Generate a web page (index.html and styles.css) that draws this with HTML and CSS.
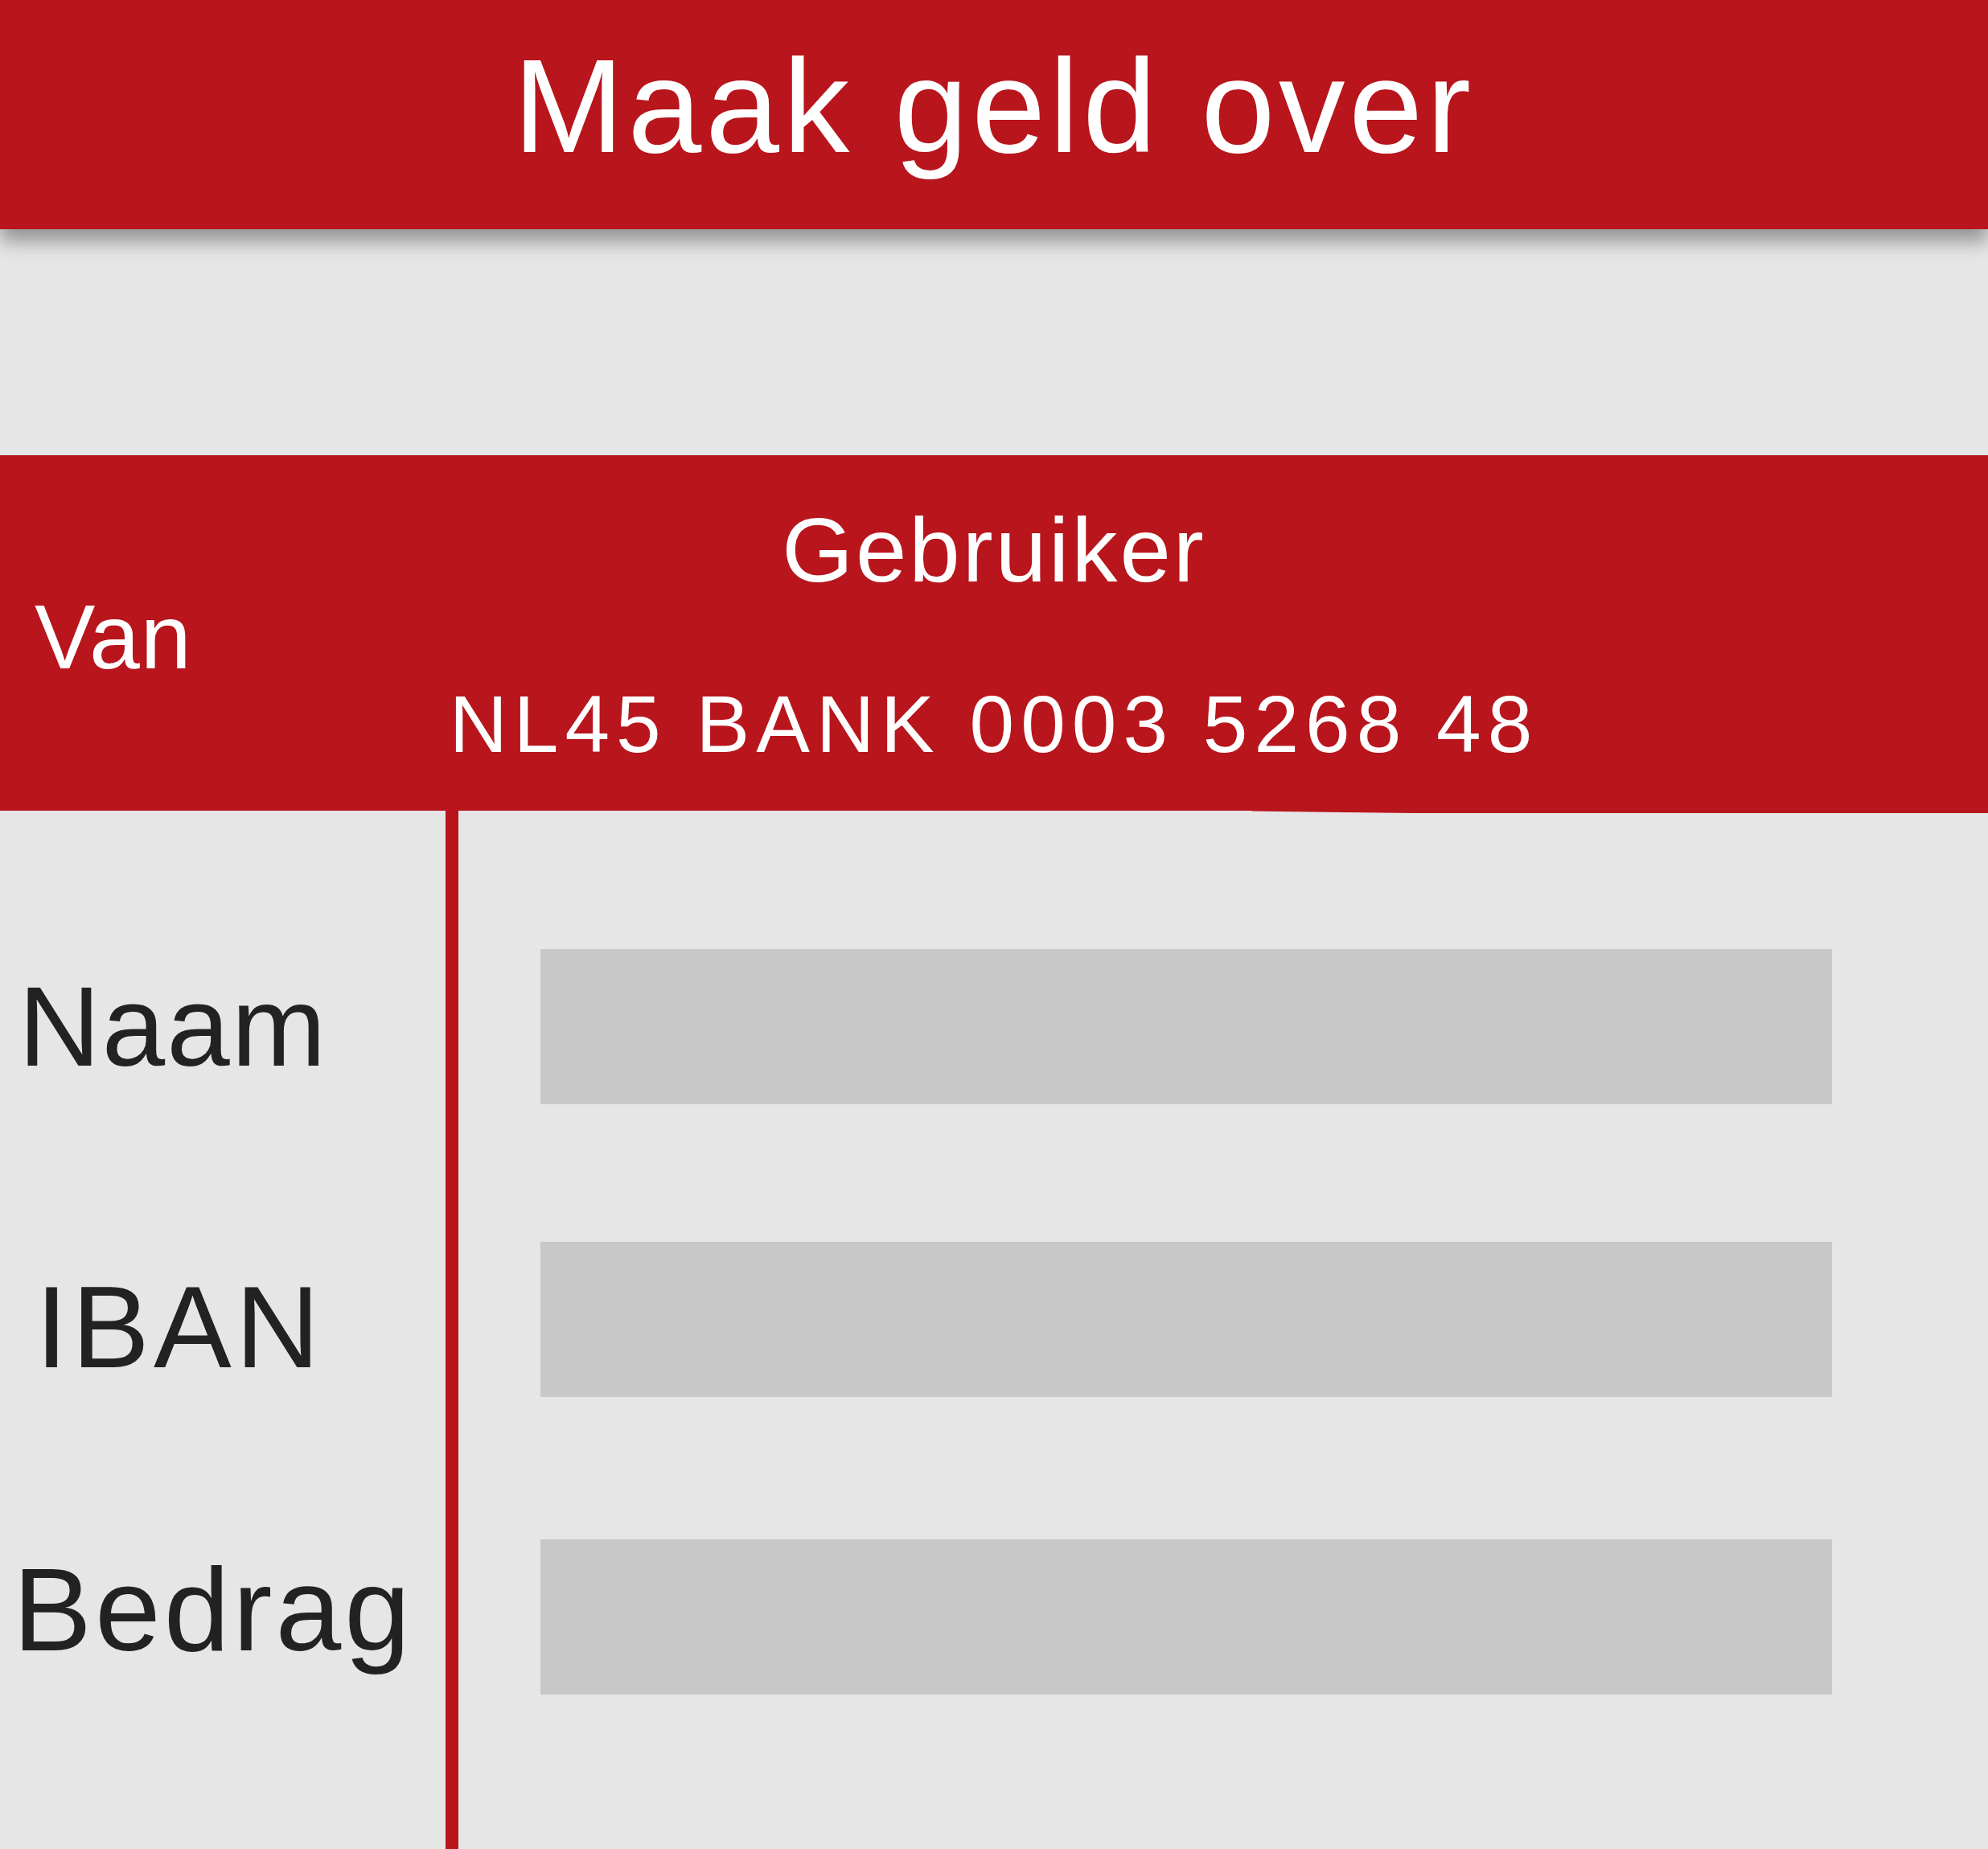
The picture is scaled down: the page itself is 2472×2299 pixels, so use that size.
FILE: index.html
```html
<!DOCTYPE html>
<html lang="nl">
<head>
<meta charset="utf-8">
<title>Maak geld over</title>
<link rel="stylesheet" href="styles.css">
</head>
<body class="page">
  <header class="topbar">
    <h1 class="topbar__title">Maak geld over</h1>
  </header>

  <section class="from">
    <div class="from__label">Van</div>
    <div class="from__account">
      <div class="from__name">Gebruiker</div>
      <div class="from__iban">NL45 BANK 0003 5268 48</div>
    </div>
    <div class="from__spacer"></div>
  </section>

  <form class="transfer">
    <div class="transfer__row">
      <label class="transfer__label transfer__label--naam">Naam</label>
      <div class="transfer__field"></div>
    </div>
    <div class="transfer__row">
      <label class="transfer__label transfer__label--iban">IBAN</label>
      <div class="transfer__field"></div>
    </div>
    <div class="transfer__row transfer__row--last">
      <label class="transfer__label transfer__label--bedrag">Bedrag</label>
      <div class="transfer__field"></div>
    </div>
  </form>
</body>
</html>
```

FILE: styles.css
```css
* {
  box-sizing: border-box;
}

html,
body {
  margin: 0;
  padding: 0;
}

.page {
  min-height: 100vh;
  display: flex;
  flex-direction: column;
  background: #e6e6e6;
  font-family: "Liberation Sans", Arial, sans-serif;
  overflow: hidden;
}

/* Top bar */
.topbar {
  position: relative;
  z-index: 2;
  height: 285px;
  padding-top: 50px;
  background: #b8151d;
  box-shadow: 0 15px 22px rgba(0, 0, 0, 0.36);
  flex: none;
}

.topbar__title {
  margin: 0;
  font-weight: 400;
  font-size: 165px;
  line-height: 165px;
  letter-spacing: 4.8px;
  color: #ffffff;
  text-align: center;
}

/* Van band */
.from {
  position: relative;
  margin-top: 281px;
  height: 442px;
  background: #b8151d;
  color: #ffffff;
  display: grid;
  grid-template-columns: 1fr auto 1fr;
  flex: none;
}

.from::after {
  content: "";
  position: absolute;
  left: 1557px;
  right: 0;
  bottom: -3px;
  height: 3px;
  background: #b8151d;
  clip-path: polygon(0 0, 100% 0, 100% 100%, 22% 100%, 10% 60%, 0 20%);
}

.from__label {
  padding: 170px 0 0 43px;
  font-size: 113px;
  line-height: 113px;
  letter-spacing: 1px;
}

.from__account {
  padding-top: 61px;
  display: flex;
  flex-direction: column;
  align-items: center;
}

.from__name {
  font-size: 114px;
  line-height: 114px;
  letter-spacing: 3px;
}

.from__iban {
  margin-top: 109px;
  font-size: 100px;
  line-height: 100px;
  letter-spacing: 8px;
}

/* Form */
.transfer {
  flex: 1;
  display: flex;
  flex-direction: column;
  gap: 171px;
  padding-top: 172px;
  background: linear-gradient(to right,
      transparent 554px,
      #b8151d 554px,
      #b8151d 570px,
      transparent 570px);
}

.transfer__row {
  display: flex;
  align-items: center;
  height: 193px;
}

.transfer__row--last {
  margin-top: 6px;
}

.transfer__label {
  flex: none;
  width: 554px;
  color: #222222;
  line-height: 1;
}

.transfer__label--naam {
  padding-left: 23px;
  font-size: 141px;
  letter-spacing: 2px;
}

.transfer__label--iban {
  padding-left: 44px;
  margin-top: 19px;
  font-size: 145px;
  letter-spacing: 5px;
}

.transfer__label--bedrag {
  padding-left: 16px;
  margin-bottom: 18px;
  font-size: 147px;
  letter-spacing: 4px;
}

.transfer__field {
  flex: 1;
  align-self: stretch;
  margin: 0 194px 0 118px;
  background: #c8c8c8;
}
```
